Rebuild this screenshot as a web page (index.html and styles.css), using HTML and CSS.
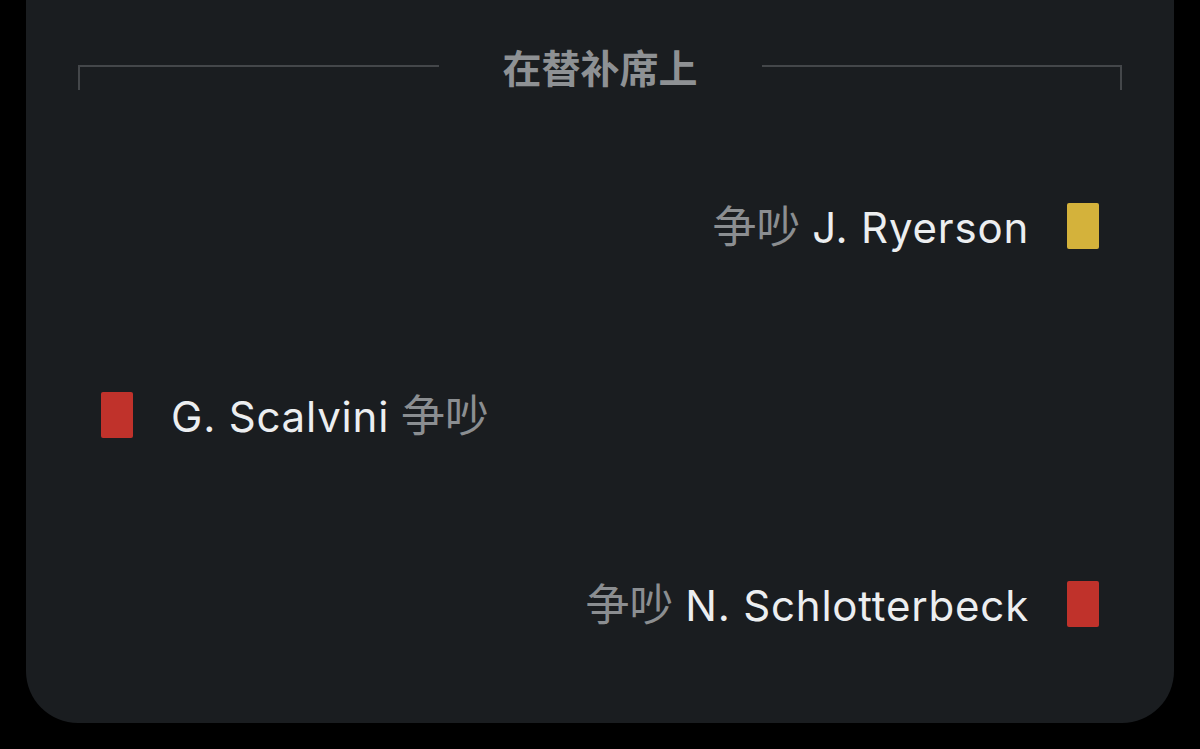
FILE: index.html
```html
<!DOCTYPE html>
<html lang="zh">
<head>
<meta charset="utf-8">
<title>在替补席上</title>
<link rel="stylesheet" href="styles.css">
</head>
<body>
<div class="card">
  <div class="header">
    <div class="bracket bracket-left"></div>
    <div class="title">在替补席上</div>
    <div class="bracket bracket-right"></div>
  </div>
  <div class="rows">
    <div class="row row-away">
      <div class="label"><span class="reason">争吵</span> <span class="name">J. Ryerson</span></div>
      <div class="booking booking-yellow"></div>
    </div>
    <div class="row row-home">
      <div class="booking booking-red"></div>
      <div class="label"><span class="name">G. Scalvini</span> <span class="reason">争吵</span></div>
    </div>
    <div class="row row-away">
      <div class="label"><span class="reason">争吵</span> <span class="name">N. Schlotterbeck</span></div>
      <div class="booking booking-red"></div>
    </div>
  </div>
</div>
</body>
</html>
```
FILE: styles.css
```css
html, body {
  margin: 0;
  padding: 0;
  background: #000;
  height: 100%;
  overflow: hidden;
}

.card {
  margin: 0 26px;
  height: 723px;
  background: #1a1d20;
  border-radius: 0 0 52px 52px;
  box-sizing: border-box;
  padding-top: 41px;
  font-family: Inter, "Noto Sans CJK SC", sans-serif;
}

.header {
  display: flex;
  align-items: center;
  height: 50px;
  padding: 0 52px 0 52px;
}

.bracket {
  flex: 1;
  align-self: flex-start;
  margin-top: 24px;
  height: 25px;
  box-sizing: border-box;
  border-top: 2px solid #44474a;
}

.bracket-left {
  border-left: 2px solid #44474a;
}

.bracket-right {
  border-right: 2px solid #44474a;
}

.title {
  margin: 0 64px;
  font-family: "Noto Sans CJK SC", sans-serif;
  font-weight: 700;
  font-size: 39px;
  line-height: 50px;
  color: #8e9194;
}

.rows {
  margin-top: 40px;
  display: flex;
  flex-direction: column;
}

.row {
  height: 189px;
  display: flex;
  align-items: center;
  gap: 38px;
  padding: 0 75px;
}

.row-away {
  justify-content: flex-end;
}

.row-home {
  justify-content: flex-start;
}

.label {
  font-size: 42px;
  line-height: 50px;
  white-space: nowrap;
}

.name {
  color: #eceef0;
  letter-spacing: 0.8px;
}

.reason {
  color: #8b8e91;
  font-family: "Noto Sans CJK SC", sans-serif;
  font-size: 44px;
}

.booking {
  width: 32px;
  height: 46px;
  border-radius: 2px;
  flex: none;
}

.booking-yellow {
  background: #d4b23b;
}

.booking-red {
  background: #c0322b;
}
```
